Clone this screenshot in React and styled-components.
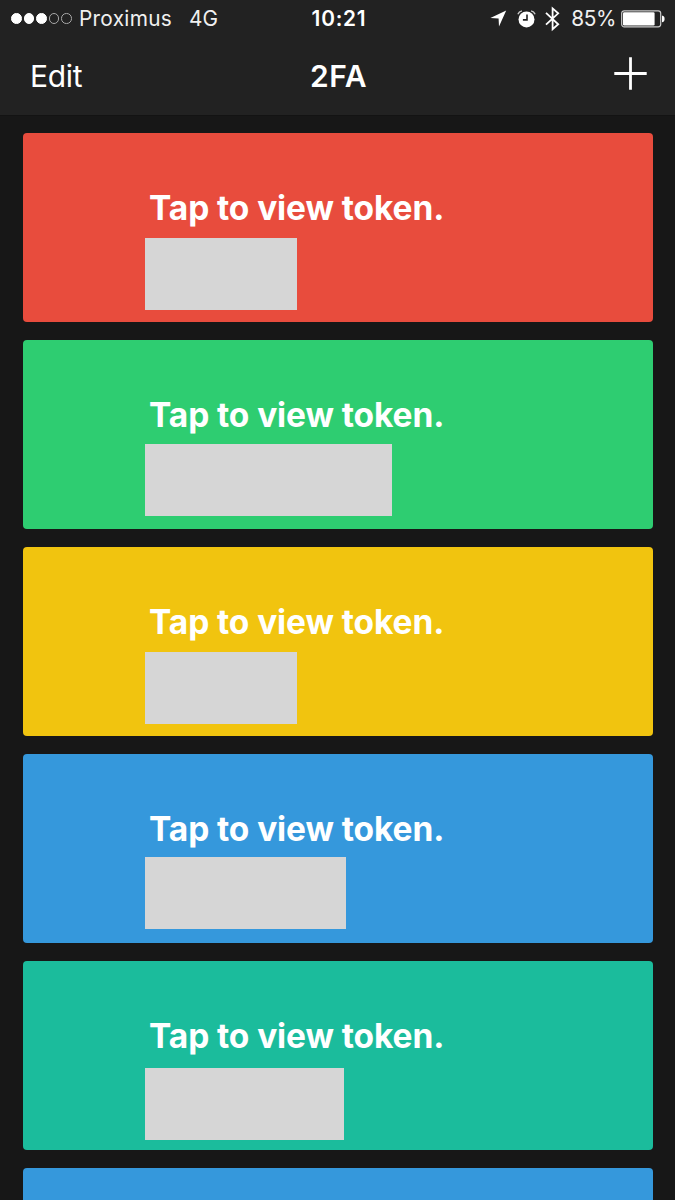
import React from 'react';
import styled, { createGlobalStyle } from 'styled-components';

const GlobalStyle = createGlobalStyle`
  body {
    margin: 0;
    background: #171717;
    overflow: hidden;
  }
`;
const Screen = styled.div`
  width: 675px;
  height: 1200px;
  overflow: hidden;
  background: #171717;
  color: #ffffff;
  font-family: Inter, 'Liberation Sans', sans-serif;
`;
const Header = styled.header`
  height: 116px;
  box-sizing: border-box;
  background: #222222;
  border-bottom: 1px solid #131313;
`;
const StatusBar = styled.div`
  display: grid;
  grid-template-columns: 1fr auto 1fr;
  align-items: center;
  height: 37px;
  padding: 0 10px 0 11px;
  font-size: 20.8px;
  line-height: 37px;
`;
const Carrier = styled.div`
  display: flex;
  align-items: center;
`;
const Signal = styled.div`
  display: flex;
  gap: 2px;
  margin-right: 7px;
`;
const SignalDot = styled.i`
  width: 10.6px;
  height: 10.6px;
  box-sizing: border-box;
  border: 1px solid ${props => (props.$on ? '#ffffff' : '#a8a8a8')};
  border-radius: 50%;
  background: ${props => (props.$on ? '#ffffff' : 'transparent')};
`;
const StatusText = styled.span`
  color: #f0f0f0;
  letter-spacing: ${props => props.$spacing || '0'};
  margin-right: ${props => props.$gap || '0'};
`;
const Clock = styled.span`
  padding-left: 2px;
  font-weight: 600;
  letter-spacing: 0.8px;
`;
const Indicators = styled.div`
  display: flex;
  align-items: center;
  justify-content: flex-end;
`;
const Icon = styled.svg`
  display: block;
  flex: none;
  margin-right: ${props => props.$gap || '0'};
`;
const NavBar = styled.nav`
  display: grid;
  grid-template-columns: 1fr auto 1fr;
  align-items: center;
  height: 77px;
  padding: 0 28px 0 30px;
`;
const EditButton = styled.button`
  justify-self: start;
  padding: 1px 0 0;
  border: 0;
  background: none;
  color: inherit;
  font: 400 30px/77px Inter, 'Liberation Sans', sans-serif;
  letter-spacing: -0.3px;
`;
const Title = styled.h1`
  margin: 0;
  padding-top: 1px;
  font-size: 30px;
  font-weight: 600;
  line-height: 77px;
  letter-spacing: 0.5px;
`;
const AddButton = styled.button`
  justify-self: end;
  padding: 0;
  border: 0;
  margin-bottom: 6px;
  background: none;
  color: inherit;
`;
const TokenList = styled.main`
  display: flex;
  flex-direction: column;
  gap: 18px;
  padding: 17px 22.5px 0;
`;
const TokenCard = styled.section`
  flex: none;
  height: 189px;
  box-sizing: border-box;
  padding: 54px 0 0 122.5px;
  border-radius: 4px;
  background: ${props => props.$color};
`;
const TokenLabel = styled.div`
  padding-left: 4px;
  font-size: 33.5px;
  font-weight: 650;
  line-height: 42px;
  letter-spacing: -0.1px;
  white-space: nowrap;
`;
const Redacted = styled.div`
  width: ${props => props.$width}px;
  height: 72px;
  margin-top: ${props => props.$top}px;
  background: #d6d6d6;
`;

const tokens = [
  { color: '#e84c3d', width: 152, top: 9.2 },
  { color: '#2ecd71', width: 247.4, top: 8.4 },
  { color: '#f1c40f', width: 152, top: 9 },
  { color: '#3598dc', width: 200.5, top: 7.2 },
  { color: '#1bbc9c', width: 199, top: 10.8 }
];

const LocationIcon = () => (
  <Icon width="17" height="17" viewBox="0 0 17 17" $gap="10px">
    <path d="M16.2 0.6 L9 16.6 L8.6 8.4 L0.4 8 Z" fill="#fff" />
  </Icon>
);

const AlarmIcon = () => (
  <Icon width="19" height="18" viewBox="0 0 19 18" $gap="9px">
    <circle cx="9.5" cy="9.4" r="8" fill="#fff" />
    <path d="M10 4.5 V9.9 H5.9" fill="none" stroke="#222" strokeWidth="1.6" />
    <path
      d="M0.9 4.2 Q2 1.5 4.9 0.9 M14.1 0.9 Q17 1.5 18.1 4.2"
      fill="none"
      stroke="#ccc"
      strokeWidth="1.4"
    />
  </Icon>
);

const BluetoothIcon = () => (
  <Icon width="15" height="26" viewBox="0 0 15 26" $gap="11.3px">
    <path
      d="M1 6.9 L13.2 18.3 L7.6 23.2 V2.4 L13.2 7.3 L1 18.7"
      fill="none"
      stroke="#fff"
      strokeWidth="1.8"
    />
  </Icon>
);

const BatteryIcon = () => (
  <Icon width="44" height="18" viewBox="0 0 44 18">
    <rect x="0.7" y="0.8" width="39" height="16" rx="2.5" fill="none" stroke="#ccc" strokeWidth="1.2" />
    <rect x="2" y="2.2" width="31.6" height="13.2" rx="1.2" fill="#fff" />
    <path d="M41 5.5 Q43.6 6 43.6 8.9 Q43.6 11.8 41 12.3 Z" fill="#fff" />
  </Icon>
);

export default function App() {
  return (
    <Screen>
      <GlobalStyle />
      <Header>
        <StatusBar>
          <Carrier>
            <Signal>
              {[true, true, true, false, false].map((on, ind) => (
                <SignalDot key={ind} $on={on} />
              ))}
            </Signal>
            <StatusText $gap="17px" $spacing="0.3px">Proximus</StatusText>
            <StatusText>4G</StatusText>
          </Carrier>
          <Clock>10:21</Clock>
          <Indicators>
            <LocationIcon />
            <AlarmIcon />
            <BluetoothIcon />
            <StatusText $gap="5px" $spacing="-0.4px">85%</StatusText>
            <BatteryIcon />
          </Indicators>
        </StatusBar>
        <NavBar>
          <EditButton>Edit</EditButton>
          <Title>2FA</Title>
          <AddButton aria-label="Add">
            <Icon width="33" height="33" viewBox="0 0 33 33">
              <path d="M0.3 16.5 H32.7 M16.5 0.3 V32.7" stroke="#fff" strokeWidth="2.8" />
            </Icon>
          </AddButton>
        </NavBar>
      </Header>
      <TokenList>
        {tokens.map(({ color, width, top }) => (
          <TokenCard key={color} $color={color}>
            <TokenLabel>Tap to view token.</TokenLabel>
            <Redacted $width={width} $top={top} />
          </TokenCard>
        ))}
        <TokenCard $color="#3598dc" />
      </TokenList>
    </Screen>
  );
}
